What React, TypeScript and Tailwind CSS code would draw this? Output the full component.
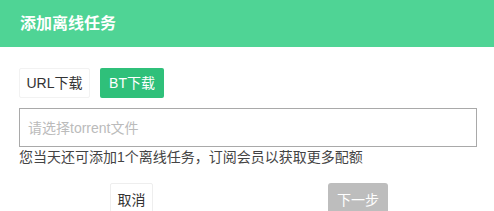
const font = {
  fontFamily: '"Liberation Sans", "Noto Sans CJK SC", sans-serif',
};

export default function App() {
  return (
    <div className="w-[494px] h-[211px] overflow-hidden bg-white" style={font}>
      <div className="h-[47px] bg-[#4fd495] flex items-center px-5">
        <h2 className="text-white text-base font-bold">添加离线任务</h2>
      </div>

      <div className="px-[19px] pt-[21px]">
        <div className="flex gap-[10px]">
          <button className="h-[30px] w-[71px] text-sm text-[#333] border border-[#f2f2f2] rounded-[2px] bg-white">
            URL下载
          </button>
          <button className="h-[30px] w-[64px] text-sm text-white bg-[#2fc07a] rounded-[2px]">
            BT下载
          </button>
        </div>

        <div className="mt-[10px] w-[458px] h-[39px] border border-[#a9a9a9] flex items-center px-[8px]">
          <span className="text-sm text-[#bbb]">请选择torrent文件</span>
        </div>

        <p className="text-sm text-[#444] leading-5 mt-0">
          您当天还可添加1个离线任务，订阅会员以获取更多配额
        </p>

        <div className="flex mt-[16px] pl-[91px]">
          <button className="h-[34px] w-[43px] text-sm text-[#333] border border-[#eee] rounded-[2px] bg-white">
            取消
          </button>
          <button className="ml-[175px] h-[34px] w-[60px] text-sm text-white bg-[#bdbdbd] rounded-[3px]">
            下一步
          </button>
        </div>
      </div>
    </div>
  );
}
